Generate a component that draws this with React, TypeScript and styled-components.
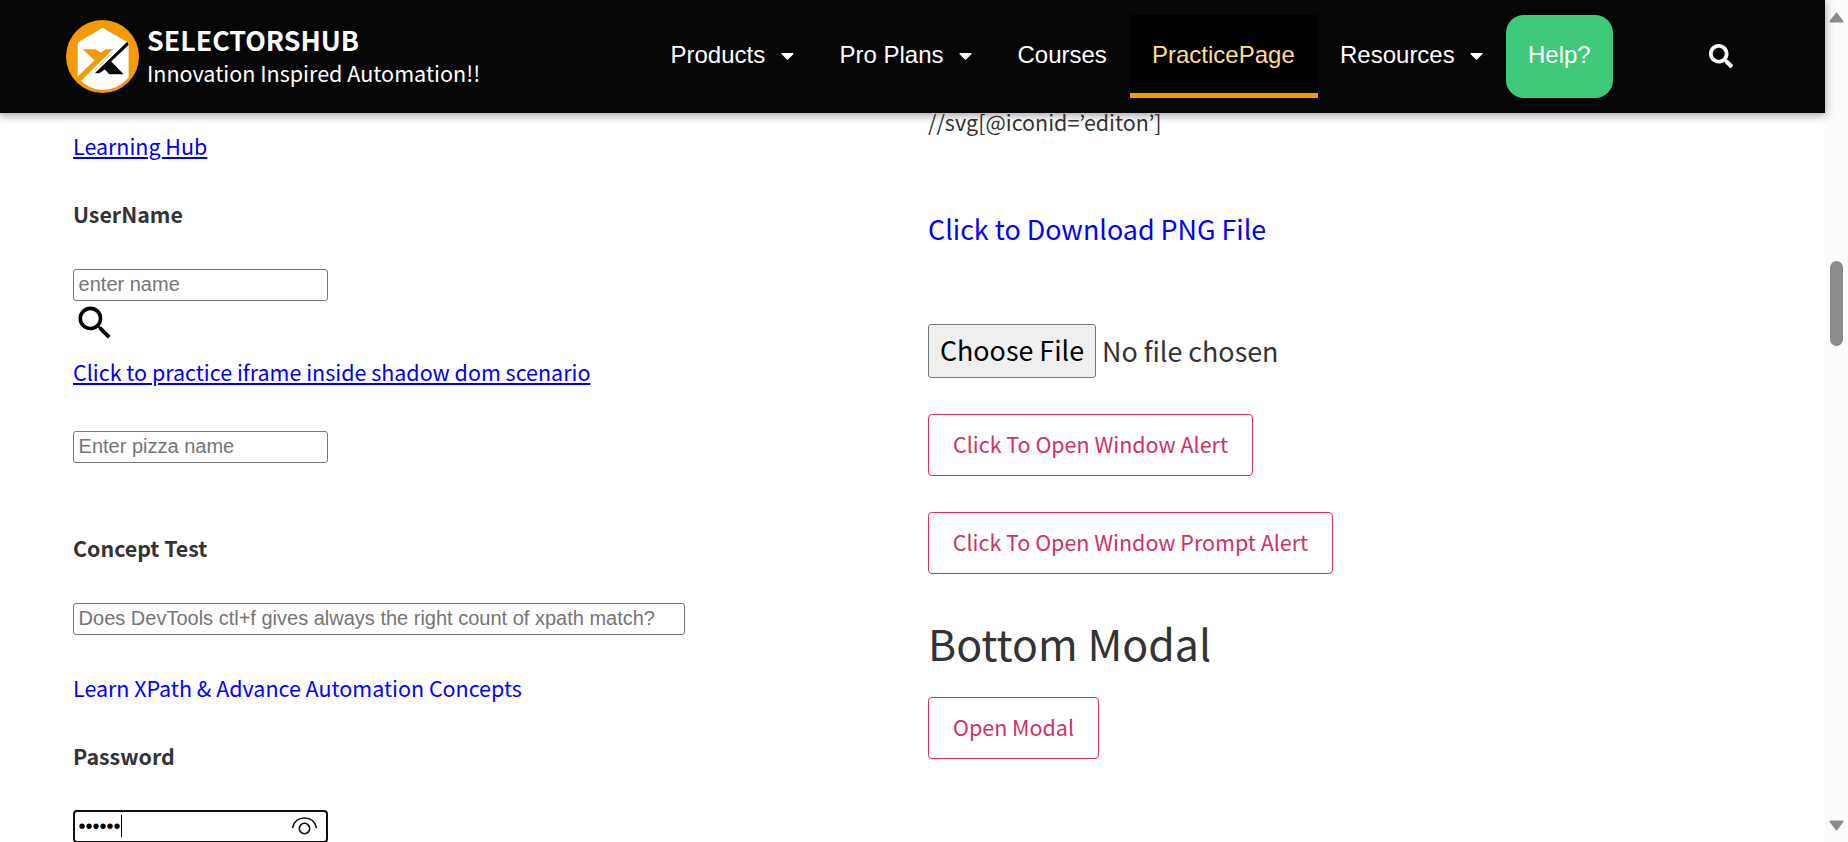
import React from 'react';
import styled, { createGlobalStyle } from 'styled-components';
import { FaCaretDown, FaSearch } from 'react-icons/fa';

const GlobalStyle = createGlobalStyle`
  * { box-sizing: border-box; }
  body {
    margin: 0;
    overflow: hidden;
    background: #fff;
    color: #333;
    font-family: 'Noto Sans CJK JP', 'Noto Sans', sans-serif;
    font-size: 21.48px;
  }
`;

const Window = styled.div`
  display: flex;
  height: 842px;
  overflow: hidden;
`;

const Page = styled.div`
  width: 1825px;
  flex: none;
`;

const Header = styled.header`
  position: relative;
  z-index: 1;
  display: flex;
  align-items: flex-start;
  height: 113px;
  background: #060606;
  box-shadow: 0 2px 8px 1px rgba(60, 50, 60, 0.42);
  color: #fff;
`;

const Brand = styled.a`
  display: flex;
  width: 648.5px;
  padding: 20px 0 0 66px;
  gap: 8px;
`;

const BrandText = styled.div`
  display: flex;
  flex-direction: column;
  white-space: nowrap;
  padding-top: 4px;
`;

const BrandName = styled.strong`
  font-size: 26.8px;
  line-height: 32px;
`;

const Tagline = styled.span`
  font-size: 21.55px;
  line-height: 34px;
`;

const Nav = styled.nav`
  display: flex;
  padding-top: 15px;
  font: 24px/75px 'Liberation Sans', Arial, sans-serif;
`;

const NavItem = styled.a<{ $width: number; $active?: boolean; $help?: boolean }>`
  display: flex;
  align-items: center;
  width: ${p => p.$width}px;
  height: 83px;
  padding: 0 0 4px 22px;
  white-space: nowrap;
  color: ${p => (p.$active ? '#ffdc9b' : '#fff')};
  background: ${p => (p.$active ? '#000' : p.$help ? '#41c97b' : 'transparent')};
  border-radius: ${p => (p.$help ? '18px' : '0')};
  box-shadow: ${p => (p.$active ? 'inset 0 -5px #f59b00' : 'none')};
`;

const Caret = styled(FaCaretDown)`
  width: 21px;
  height: 21px;
  margin: 1px 0 0 11.5px;
`;

const NavSearch = styled(FaSearch)`
  margin: 44px 0 0 95.5px;
  width: 24px;
  height: 24px;
`;

const Content = styled.main`
  display: grid;
  grid-template-columns: 855px 1fr;
  padding-left: 73px;
`;

const Column = styled.section`
  display: flex;
  flex-direction: column;
  align-items: flex-start;
`;

const Line = styled.div<{ $top: number }>`
  margin-top: ${p => p.$top}px;
  height: 32px;
  line-height: 32px;
  white-space: nowrap;
`;

const Label = styled(Line)`
  font-size: 21.4px;
  font-weight: 700;
`;

const Link = styled.a<{ $plain?: boolean }>`
  color: ${p => (p.$plain ? '#0000ff' : '#0000ee')};
  text-decoration: ${p => (p.$plain ? 'none' : 'underline')};
  text-decoration-thickness: 2px;
  text-underline-offset: 2px;
`;

const Input = styled.input<{ $top: number; $wide?: boolean }>`
  margin: ${p => p.$top}px 0 0;
  width: ${p => (p.$wide ? 612 : 255)}px;
  height: 32px;
  padding: 0 4px 2px 4.6px;
  border: 1px solid #767676;
  border-radius: 3px;
  background: #fff;
  font: 20px 'Liberation Sans', Arial, sans-serif;
  &::placeholder { color: #757575; opacity: 1; }
`;

const PasswordBox = styled.div`
  display: flex;
  align-items: center;
  width: 255px;
  height: 33px;
  margin-top: 38px;
  padding: 0 8px 2px 3.5px;
  border: 2px solid #101010;
  border-radius: 4px;
  color: #000;
  font: 20px/26px 'Liberation Sans', Arial, sans-serif;
`;

const CaretBar = styled.i`
  width: 1px;
  height: 22px;
  background: #000;
`;

const EyeIcon = styled.svg`
  width: 27px;
  height: 20px;
  margin-left: auto;
`;

const Glass = styled.svg`
  width: 44px;
  height: 44px;
`;

const Download = styled.a`
  margin-top: 71px;
  font-size: 26.87px;
  line-height: 40px;
  color: #0000ff;
`;

const FileRow = styled.div`
  display: flex;
  margin-top: 75px;
  height: 54px;
  font-size: 26.87px;
  line-height: 50px;
`;

const FileButton = styled.button`
  width: 168px;
  height: 54px;
  padding: 0 0 3px;
  border: 1px solid #767676;
  border-radius: 3px;
  background: #efefef;
  color: #000;
  font: inherit;
`;

const FileName = styled.span`
  padding: 2px 0 0 6px;
`;

const Button = styled.button<{ $width: number; $top: number }>`
  width: ${p => p.$width}px;
  height: 62px;
  margin: ${p => p.$top}px 0 0;
  padding: 0 0 4px;
  border: 1px solid #cc3366;
  border-radius: 4px;
  background: transparent;
  color: #cc3366;
  font: inherit;
  white-space: nowrap;
`;

const Heading = styled.h2`
  margin: 38px 0 25px;
  font-size: 42.9px;
  font-weight: 400;
  line-height: 60px;
`;

const ScrollTrack = styled.aside`
  display: flex;
  flex-direction: column;
  align-items: center;
  width: 23px;
  padding: 12px 1px 11px 0;
  background: #fcfcfc;
`;

const Thumb = styled.div`
  width: 13px;
  height: 85px;
  margin: 238px 0 auto;
  border-radius: 7px;
  background: #8b8b8b;
`;

function Logo() {
  return (
    <svg width="73" height="73" viewBox="18 18 218 218">
      <circle cx="127" cy="127" r="109" fill="#f49a06" />
      <path d="M127 41 201 84Q205 87 205 92V190Q174 226 127 227Q84 226 53 190V92Q53 86 57 83Z" fill="#fff" />
      <path d="M50 190 103 138 68 105H106L122 116 136 105H158L61 202Z" fill="#f49a06" />
      <path d="M201 83 104 177H117L134 166 147 180H190L153 142 205 93Z" fill="#080808" />
      <path d="M104 167 158 113" stroke="#fff" strokeWidth="4" />
      <path d="M105 167 157 114" stroke="#aaa" strokeWidth="3" strokeDasharray="3 2" />
    </svg>
  );
}

const ScrollArrow = ({ down }: { down?: boolean }) => (
  <svg width="15" height="11" viewBox="0 0 15 11">
    <path d={down ? 'M1.5 1.5h12L7.5 9.5Z' : 'M7.5 1.5 13.5 9.5H1.5Z'} fill="#8b8b8b" stroke="#8b8b8b" strokeWidth="2" strokeLinejoin="round" />
  </svg>
);

export default function App() {
  return (
    <Window>
      <GlobalStyle />
      <Page>
        <Header>
          <Brand>
            <Logo />
            <BrandText>
              <BrandName>SELECTORSHUB</BrandName>
              <Tagline>Innovation Inspired Automation!!</Tagline>
            </BrandText>
          </Brand>
          <Nav>
            <NavItem $width={169}>Products<Caret /></NavItem>
            <NavItem $width={178}>Pro Plans<Caret /></NavItem>
            <NavItem $width={134.5}>Courses</NavItem>
            <NavItem $width={188} $active>PracticePage</NavItem>
            <NavItem $width={188}>Resources<Caret /></NavItem>
            <NavItem $width={107} $help>Help?</NavItem>
          </Nav>
          <NavSearch />
        </Header>
        <Content>
          <Column>
            <Line $top={17}><Link>Learning Hub</Link></Line>
            <Label $top={36}>UserName</Label>
            <Input $top={39} placeholder="enter name" />
            <Glass viewBox="0 0 24 24">
              <path d="M15.5 14h-.79l-.28-.27A6.47 6.47 0 0 0 16 9.5 6.5 6.5 0 1 0 9.5 16c1.61 0 3.09-.59 4.23-1.57l.27.28v.79l5 4.99L20.49 19l-4.99-5zm-6 0C7.01 14 5 11.99 5 9.5S7.01 5 9.5 5 14 7.01 14 9.5 11.99 14 9.5 14z" />
            </Glass>
            <Line $top={11}><Link>Click to practice iframe inside shadow dom scenario</Link></Line>
            <Input $top={43} placeholder="Enter pizza name" />
            <Label $top={69}>Concept Test</Label>
            <Input $top={39} $wide placeholder="Does DevTools ctl+f gives always the right count of xpath match?" />
            <Line $top={37}><Link $plain>Learn XPath &amp; Advance Automation Concepts</Link></Line>
            <Label $top={36}>Password</Label>
            <PasswordBox>
              ••••••
              <CaretBar />
              <EyeIcon viewBox="0 0 27 20" fill="none" stroke="#111" strokeWidth="1.6">
                <path d="M1.5 12C3 5 8 2 13.5 2S24 5 25.5 12" />
                <circle cx="13.5" cy="12.5" r="5.2" />
              </EyeIcon>
            </PasswordBox>
          </Column>
          <Column>
            <Line $top={-7}>//svg[@iconid=’editon’]</Line>
            <Download>Click to Download PNG File</Download>
            <FileRow>
              <FileButton>Choose File</FileButton>
              <FileName>No file chosen</FileName>
            </FileRow>
            <Button $top={36} $width={325}>Click To Open Window Alert</Button>
            <Button $top={36} $width={405}>Click To Open Window Prompt Alert</Button>
            <Heading>Bottom Modal</Heading>
            <Button $top={0} $width={171}>Open Modal</Button>
          </Column>
        </Content>
      </Page>
      <ScrollTrack>
        <ScrollArrow />
        <Thumb />
        <ScrollArrow down />
      </ScrollTrack>
    </Window>
  );
}
